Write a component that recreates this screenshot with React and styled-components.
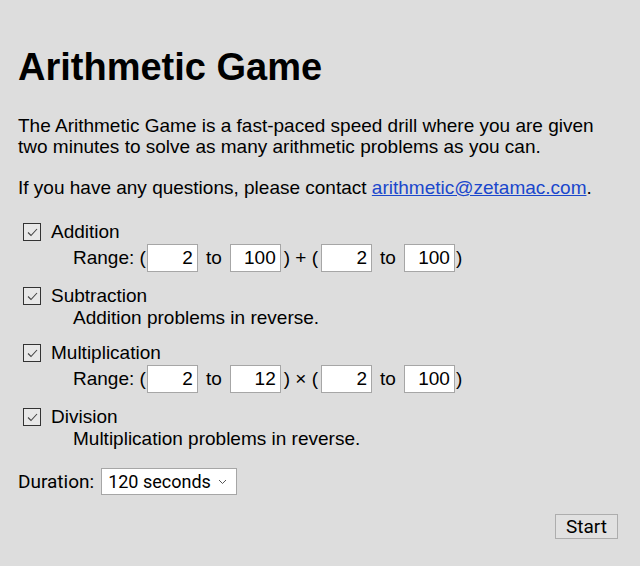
import styled, { createGlobalStyle } from 'styled-components'

const GlobalStyle = createGlobalStyle`
  html, body {
    margin: 0;
    background: #dddddd;
  }
  body {
    font-family: "Liberation Sans", Arial, sans-serif;
    font-size: 19px;
    color: #000;
  }
`

const Page = styled.div`
  padding: 45px 18px 20px 18px;
`

const Title = styled.h1`
  font-size: 38px;
  font-weight: 700;
  margin: 0 0 26px 0;
  line-height: 44px;
`

const Text = styled.p`
  margin: 0 0 20px 0;
  line-height: 21px;
`

const Mail = styled.a`
  color: #1a47cc;
  text-decoration: underline;
`

const Problems = styled.div`
  display: flex;
  flex-direction: column;
  gap: 13px;
  margin-top: 23px;
`

const Problem = styled.div`
  display: flex;
  flex-direction: column;
`

const Head = styled.label`
  display: flex;
  align-items: center;
  gap: 10px;
  padding-left: 5px;
  height: 22px;
`

const Box = styled.span`
  width: 16px;
  height: 16px;
  border: 1px solid #333;
  background: #e8e8e8;
  display: flex;
  align-items: center;
  justify-content: center;
`

const Detail = styled.div`
  display: flex;
  align-items: center;
  padding-left: 55px;
  height: ${p => (p.$inputs ? '29px' : '22px')};
`

const Num = styled.input`
  width: 51px;
  height: 28px;
  box-sizing: border-box;
  border: 1px solid #a6a6a6;
  background: #fff;
  font-family: "Liberation Sans", Arial, sans-serif;
  font-size: 19px;
  text-align: right;
  padding: 0 4px 0 2px;
  margin: 0 1px;
  outline: none;
`

const Word = styled.span`
  margin: 0 ${p => p.$gap || 0}px;
  white-space: pre;
`

const Footer = styled.div`
  display: flex;
  align-items: center;
  gap: 7px;
  margin-top: 18px;
  font-family: Roboto, "Noto Sans", sans-serif;
  font-size: 19px;
`

const Select = styled.div`
  width: 136px;
  height: 27px;
  box-sizing: border-box;
  border: 1px solid #a6a6a6;
  background: #fff;
  display: flex;
  align-items: center;
  justify-content: space-between;
  padding: 0 9px 0 6px;
  font-size: 18px;
`

const Actions = styled.div`
  display: flex;
  justify-content: flex-end;
  margin-top: 19px;
  padding-right: 4px;
`

const StartButton = styled.button`
  width: 63px;
  height: 25px;
  border: 1px solid #adadad;
  background: #e1e1e1;
  font-family: Roboto, "Noto Sans", sans-serif;
  font-size: 19px;
  padding: 0;
  color: #000;
`

const Check = () => (
  <Box>
    <svg width="13" height="13" viewBox="0 0 13 13">
      <path d="M2 6.5 L5 9.5 L11 3" fill="none" stroke="#444" strokeWidth="1.1" />
    </svg>
  </Box>
)

const Range = ({ a, b, c, d, op }) => (
  <Detail $inputs>
    <Word>Range: (</Word>
    <Num defaultValue={a} />
    <Word $gap={7}>to</Word>
    <Num defaultValue={b} />
    <Word $gap={2}>{`) ${op} (`}</Word>
    <Num defaultValue={c} />
    <Word $gap={7}>to</Word>
    <Num defaultValue={d} />
    <Word>)</Word>
  </Detail>
)

export default function App() {
  return (
    <Page>
      <GlobalStyle />
      <Title>Arithmetic Game</Title>
      <Text>
        The Arithmetic Game is a fast-paced speed drill where you are given two minutes to solve
        as many arithmetic problems as you can.
      </Text>
      <Text>
        If you have any questions, please contact{' '}
        <Mail href="#">arithmetic@zetamac.com</Mail>.
      </Text>
      <Problems>
        <Problem>
          <Head><Check />Addition</Head>
          <Range a="2" b="100" c="2" d="100" op="+" />
        </Problem>
        <Problem>
          <Head><Check />Subtraction</Head>
          <Detail>Addition problems in reverse.</Detail>
        </Problem>
        <Problem>
          <Head><Check />Multiplication</Head>
          <Range a="2" b="12" c="2" d="100" op="×" />
        </Problem>
        <Problem>
          <Head><Check />Division</Head>
          <Detail>Multiplication problems in reverse.</Detail>
        </Problem>
      </Problems>
      <Footer>
        <span>Duration:</span>
        <Select>
          <span>120 seconds</span>
          <svg width="9" height="6" viewBox="0 0 9 6">
            <path d="M1 1 L4.5 4.5 L8 1" fill="none" stroke="#555" strokeWidth="1" />
          </svg>
        </Select>
      </Footer>
      <Actions>
        <StartButton>Start</StartButton>
      </Actions>
    </Page>
  )
}
